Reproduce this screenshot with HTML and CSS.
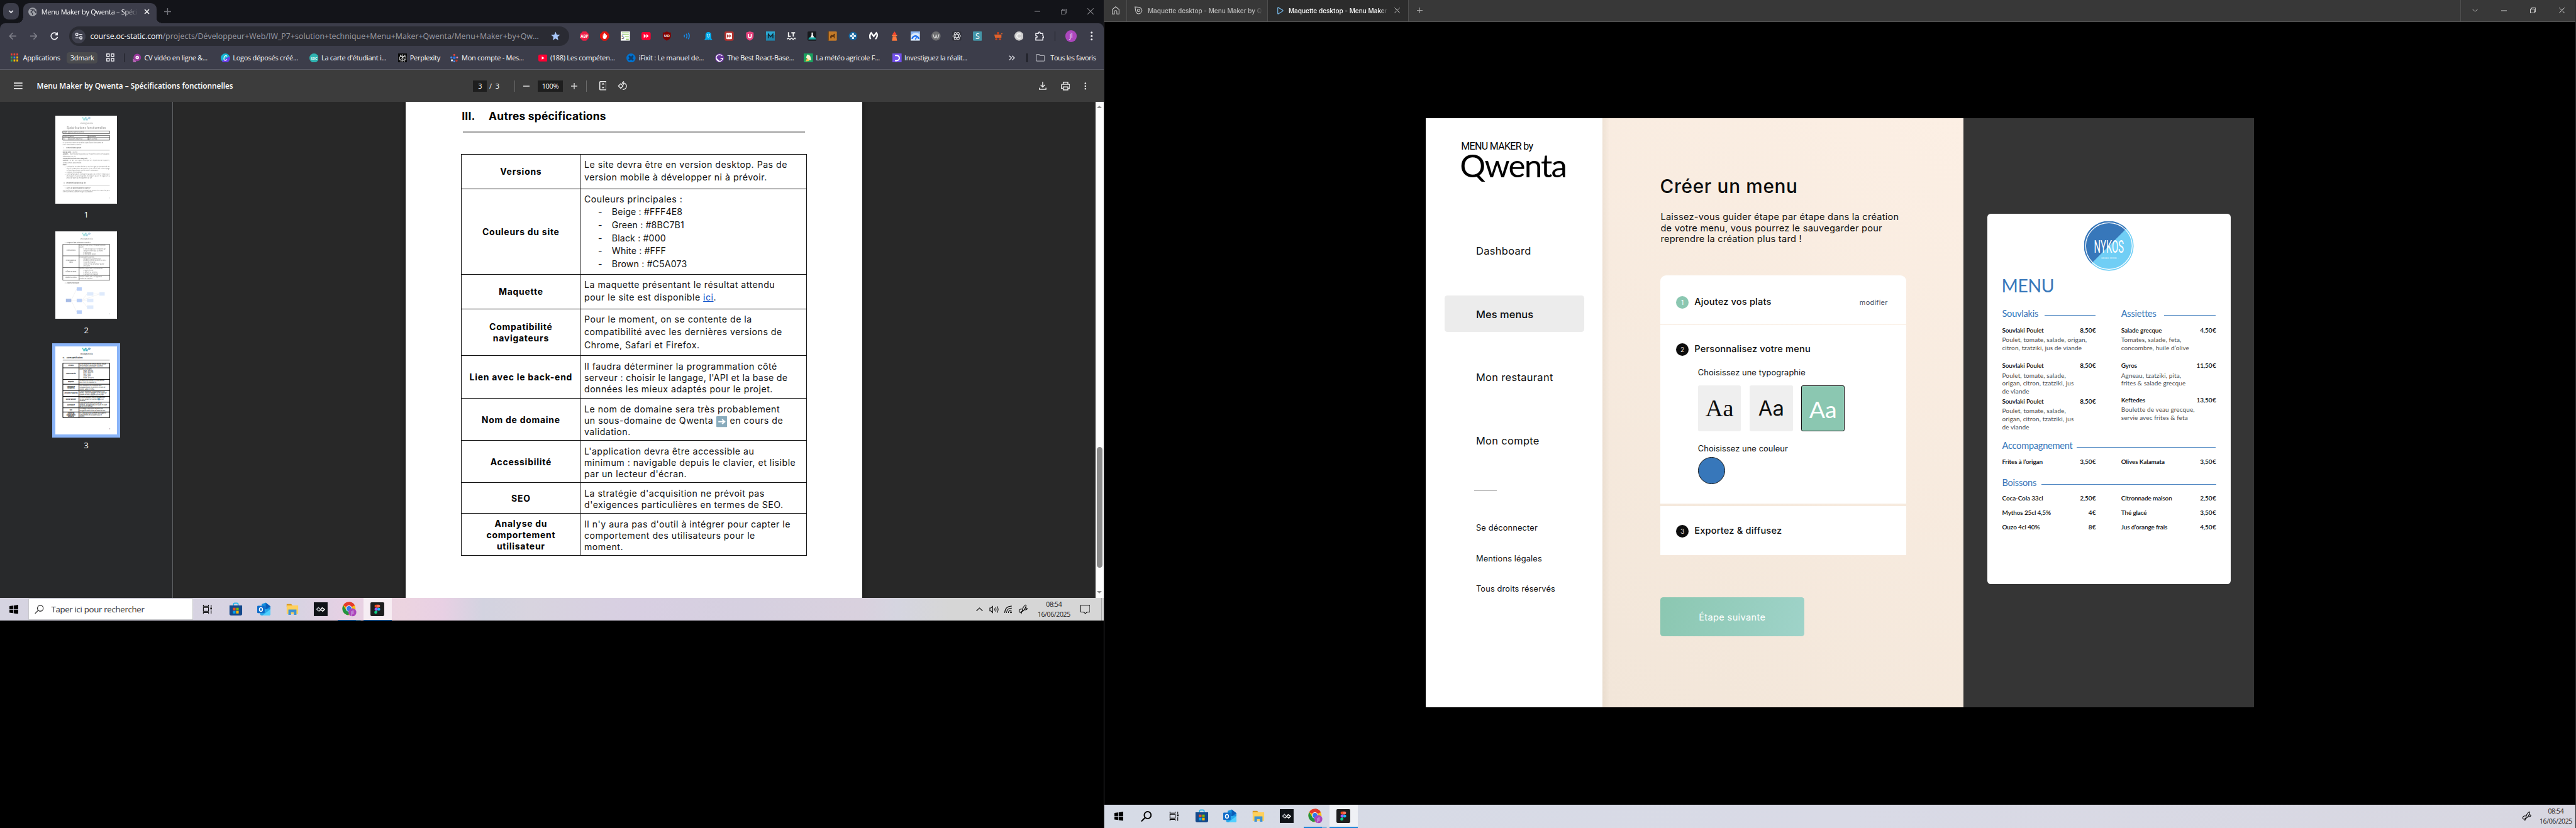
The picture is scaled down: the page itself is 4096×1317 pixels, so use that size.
FILE: index.html
```html
<!DOCTYPE html>
<html lang="fr">
<head>
<meta charset="utf-8">
<title>Menu Maker by Qwenta</title>
<link rel="stylesheet" href="styles.css">
</head>
<body>
<svg class="defs" width="0" height="0">
  <symbol id="i-win" viewBox="0 0 16 16"><path d="M0 2.3 6.6 1.4V7.6H0zM7.4 1.3 16 0V7.6H7.4zM0 8.4H6.6v6.2L0 13.7zM7.4 8.4H16V16L7.4 14.7z"/></symbol>
  <symbol id="i-mag" viewBox="0 0 16 16"><g fill="none" stroke="currentColor"><circle cx="10" cy="6" r="5"/><path d="M6.5 9.5.8 15.2"/></g></symbol>
  <symbol id="i-view" viewBox="0 0 18 16"><g fill="none" stroke="currentColor" stroke-width="1.2"><path d="M1.5 0v2.5h9V0M1.5 16v-2.5h9V16M1.5 4.6h9v6.6h-9zM15 0v4M15 9.500v6.500"/></g><path d="M13.600 5h2.800v3h-2.800z"/></symbol>
  <symbol id="i-store" viewBox="0 0 24 24"><path d="M8 6V3.500Q8 1.500 10 1.500h4q2 0 2 2V6" fill="none" stroke="#22b8f0" stroke-width="1.800"/><path d="M1 5.500h22V20q0 3-3 3H4q-3 0-3-3z" fill="#14498c"/><path d="M7 9.500h4.500V14H7z" fill="#f25022"/><path d="M12.500 9.500H17V14h-4.500z" fill="#7fba00"/><path d="M7 15h4.500v4.500H7z" fill="#00a4ef"/><path d="M12.500 15H17v4.500h-4.500z" fill="#ffb900"/></symbol>
  <symbol id="i-outlook" viewBox="0 0 24 24"><path d="M8 3 15 .5 23 7v5l-9 5-7-6z" fill="#1490df"/><path d="M15 1 23 7l-9 6z" fill="#0a5cb8"/><path d="M5 12h18v8q0 3-3 3H8q-3 0-3-3z" fill="#28a8ea"/><path d="M23 12v8q0 3-3 3H9z" fill="#50d0ff"/><rect x="0" y="6" width="13" height="13" rx="1.500" fill="#0f6cc9"/><ellipse cx="6.500" cy="12.500" rx="2.700" ry="3.200" fill="none" stroke="#fff" stroke-width="1.600"/></symbol>
  <symbol id="i-files" viewBox="0 0 24 24"><path d="M2 3h8l2 2.500V8H2z" fill="#d99a20"/><path d="M2 5.500h20v15H2z" fill="#ffd05c"/><path d="M5 12.500h14V22h-4.500v-4.500h-5V22H5z" fill="#3f93d2"/></symbol>
  <symbol id="i-daily" viewBox="0 0 24 24"><path d="M0 0h24v24H0z" fill="#0e1217"/><g fill="none" stroke="#fff" stroke-width="1.700"><path d="M8.500 15.500 5 12l3-3 3 3" stroke="#b9bec5"/><path d="M9.500 15.500 15 9"/><path d="m14.500 9.500 4 3-3 3-2.500-2"/></g></symbol>
  <symbol id="i-chrome" viewBox="0 0 26 26"><circle cx="13" cy="12" r="11.500" fill="#fbc116"/><path d="M3 6.300A11.500 11.500 0 0 1 23 6.300L13 12z" fill="#e33b2e"/><path d="M13 .5A11.500 11.500 0 0 1 23.300 6.800H13z" fill="#e33b2e"/><path d="M3 6.300A11.500 11.500 0 0 0 12 23.500L17 15 8 14.500z" fill="#229342"/><circle cx="13" cy="12" r="5.400" fill="#fff"/><circle cx="13" cy="12" r="4.300" fill="#3079e8"/><circle cx="19" cy="18.500" r="7" fill="#ab47bc"/><text x="19" y="21.500" font-size="8" fill="#fff" text-anchor="middle" font-family="Open Sans">jl</text></symbol>
  <symbol id="i-figma" viewBox="0 0 24 24"><rect width="24" height="24" rx="2" fill="#1e1e1e"/><path d="M12 4H9.800a2.700 2.700 0 0 0 0 5.400H12z" fill="#f24e1e"/><path d="M12 4h2.200a2.700 2.700 0 0 1 0 5.400H12z" fill="#ff7262"/><path d="M12 9.400H9.800a2.700 2.700 0 0 0 0 5.400H12z" fill="#a259ff"/><circle cx="14.500" cy="12.100" r="2.600" fill="#1abcfe"/><path d="M12 14.700H9.800a2.600 2.600 0 1 0 2.200 2.600z" fill="#0acf83"/></symbol>
  <symbol id="i-pen" viewBox="0 0 18 18"><g fill="none" stroke="currentColor" stroke-width="1.200"><path d="M7 12.500C6.500 9 9.500 3 12.500 1.500c2-.5 1.500 2-.5 5.500-1.300 2.400-3 5-5 5.500zM6.500 8.500c-3-.5-5 1-5 3.500s3 3.500 5 .5M12.500 7c2.500-1 4 .5 2.500 2s-3.500.5-4 .8"/><path d="M6.500 12.500 5 17"/></g></symbol>
  <symbol id="i-w" viewBox="0 0 108 52"><g fill="none" stroke-width="9" stroke-linecap="round"><path d="M5 6 26 46 42 8" stroke="#3fc6b8"/><path d="M42 8 62 46 74 24" stroke="#38a3c4"/><path d="M20 5 42 44 60 6" stroke="#45b5c0" stroke-width="5"/><circle cx="90" cy="16" r="11" stroke="#2f7fb5" stroke-width="7"/></g></symbol>
</svg>

<div class="desk">
<section class="left">
  <div class="chrome">
    <header class="tabs">
      <div class="tabsearch"><svg width="10" height="8" viewBox="0 0 10 8"><path d="m1.500 2 3.500 3.500L8.500 2" fill="none" stroke="#e8e8ee" stroke-width="1.800"/></svg></div>
      <div class="tab">
        <svg width="15" height="15" viewBox="0 0 16 16"><circle cx="8" cy="8" r="8" fill="#9fa1a8"/><path d="M4 3.500c3-1 5 0 4 2s-3 1-3 3 3 1 3 3-1 2-1 2M10 3c1 2 0 3 2 4s2 2 1 3" fill="none" stroke="#3c3d4a" stroke-width="1.800"/></svg>
        <span class="tabname">Menu Maker by Qwenta – Spéci</span>
        <svg width="10" height="10" viewBox="0 0 10 10"><path d="m1.200 1.200 7.600 7.600m0-7.600L1.200 8.800" stroke="#fff" stroke-width="1.600"/></svg>
      </div>
      <svg class="newtab" width="12" height="12" viewBox="0 0 12 12"><path d="M6 0v12M0 6h12" stroke="#73747c" stroke-width="1.500"/></svg>
      <div class="winctl">
        <svg width="10" height="10" viewBox="0 0 10 10"><path d="M0 4.500h10" stroke="#8b8b90"/></svg>
        <svg width="10" height="10" viewBox="0 0 10 10"><path d="M.5 2.500h7v7h-7zM2.500 2.500v-2h7v7h-2" fill="none" stroke="#8b8b90"/></svg>
        <svg width="11" height="11" viewBox="0 0 10 10"><path d="m.3.3 9.400 9.400m0-9.400L.3 9.700" stroke="#8b8b90"/></svg>
      </div>
    </header>
    <div class="bar">
      <nav class="navbtns">
        <svg width="14" height="14" viewBox="0 0 14 14"><path d="M13 7H1.500M7 1.300 1.300 7 7 12.700" fill="none" stroke="#7f808a" stroke-width="1.700"/></svg>
        <svg width="14" height="14" viewBox="0 0 14 14"><path d="M1 7h11.500M7 1.300 12.700 7 7 12.700" fill="none" stroke="#7f808a" stroke-width="1.700"/></svg>
        <svg width="14" height="14" viewBox="0 0 14 14"><path d="M12.500 8.500A5.700 5.700 0 1 1 11.500 3.500M12.300.5v4.300H8" fill="none" stroke="#f0f0f5" stroke-width="1.800"/></svg>
      </nav>
      <div class="omni">
        <span class="site"><svg width="14" height="14" viewBox="0 0 14 14"><g fill="none" stroke="#e6e6ee" stroke-width="1.600"><circle cx="3.500" cy="4" r="2"/><path d="M7.500 4H13M1 10h5.500"/><circle cx="10.500" cy="10" r="2"/></g></svg></span>
        <span class="url"><b>course.oc-static.com</b>/projects/Développeur+Web/IW_P7+solution+technique+Menu+Maker+Qwenta/Menu+Maker+by+Qw...</span>
        <svg width="16" height="16" viewBox="0 0 16 16"><path d="m8 .5 2.200 5.200 5.600.4-4.300 3.600 1.400 5.500L8 12.200l-4.900 3 1.400-5.500L.2 6.100l5.600-.4z" fill="#a8c7fa"/></svg>
      </div>
      <div class="exts">
        <i><svg viewBox="0 0 16 16"><path d="M5 0h6l5 5v6l-5 5H5l-5-5V5z" fill="#ed1e45"/><text x="8" y="10.500" font-size="6.800" font-weight="700" fill="#fff" text-anchor="middle">ABP</text></svg></i>
        <i><svg viewBox="0 0 16 16"><path d="M5 0h6l5 5v6l-5 5H5l-5-5V5z" fill="#e4150f"/><path d="M5 5v5q0 3 3 3t3.500-3l1-3-1.500-.3-.8 1.300V4.500H9V7 3H7.500v4V4H6v4z" fill="#fff"/></svg></i>
        <i><svg viewBox="0 0 16 16"><path d="M0 0h16v16H0z" fill="#fff"/><path d="M2 2.500h12M5 5.500h9M7 8.500h7M9 11.500h5M9 14h5" stroke="#7cc242" stroke-width="1.300"/><text x="1" y="13.500" font-size="9" fill="#444">5</text></svg></i>
        <i><svg viewBox="0 0 16 16"><rect y="1" width="16" height="14" rx="3" fill="#ff0033"/><path d="m4 4.500 4 3.500-4 3.500zm4.500 0 4 3.500-4 3.500z" fill="#fff"/></svg></i>
        <i><svg viewBox="0 0 16 16"><path d="M8 0c2 1.500 4.500 2 7 2v6c0 4-3 6.500-7 8-4-1.500-7-4-7-8V2c2.500 0 5-.5 7-2z" fill="#800000"/><text x="8" y="9.500" font-size="6.500" font-weight="700" fill="#fff" text-anchor="middle">UO</text></svg></i>
        <i><svg viewBox="0 0 16 16"><g fill="none" stroke="#1689e6" stroke-width="1.800"><path d="M2 6q1.500 2 0 4M5.500 4q3 4 0 8M9 2.500q4 5.500 0 11"/></g></svg></i>
        <i><svg viewBox="0 0 16 16"><path d="M3 6.500Q3 1 8 1t5 5.500V12l2 2.500-3 .5-2-1-2 1-2-1-2 1-3-.5L3 12z" fill="#00aef0"/><circle cx="6.300" cy="6" r="1.200" fill="#fff"/><circle cx="9.700" cy="6" r="1.200" fill="#fff"/><path d="M5.800 9q2.200 2 4.400 0" fill="none" stroke="#fff"/></svg></i>
        <i><svg viewBox="0 0 16 16"><rect width="16" height="16" rx="3" fill="#b3302d"/><rect x="3" y="2.500" width="10" height="11" rx="1.500" fill="#fff"/><path d="m4.500 5 3.500 3-3.500 3zm3.800 0 3.500 3-3.500 3z" fill="#b3302d"/></svg></i>
        <i><svg viewBox="0 0 16 16"><path d="M1.500 2 8 0l6.500 2v6q0 6-6.500 8-6.500-2-6.500-8z" fill="#e8447f"/><path d="M5.500 4.500v4q0 2.500 2.500 2.500t2.500-2.500v-4" fill="none" stroke="#fff" stroke-width="1.800"/></svg></i>
        <i><svg viewBox="0 0 16 16"><path d="M0 0h16v16H0z" fill="#1f86ad"/><path d="M0 0h16v6H0z" fill="#2ca8d2"/><path d="M4 12V4.500l4 5 4-5V12" fill="none" stroke="#12242e" stroke-width="1.600"/></svg></i>
        <i><svg viewBox="0 0 16 16"><path d="M3 1.500v7h4M8 2.500h6.500M11.300 2.500V9" fill="none" stroke="#f4f4f4" stroke-width="2"/><path d="m.5 13.500 2-1.800 3 2.300 2.700-2.300 3 2.300 3-2.300 1.500 1.500" fill="none" stroke="#f4f4f4" stroke-width="1.800"/></svg></i>
        <i><svg viewBox="0 0 16 16"><rect width="16" height="16" rx="2" fill="#17191d"/><path d="M7 2h2.500v4.500L13 13H3.500L7 6.500z" fill="#f3f3f3"/><path d="M2.500 10.500h11L15 14H1.500z" fill="#17a7a1"/></svg></i>
        <i><svg viewBox="0 0 16 16"><rect width="16" height="16" rx="1.500" fill="#c47a28"/><path d="M0 0h2v16H0z" fill="#6b4115"/><path d="M4.500 12V8l2-2 3 .5L11 4l2 .5-.8 2V12h-1.500V9.500H7V12z" fill="#5b3310"/></svg></i>
        <i><svg viewBox="0 0 16 16"><circle cx="8" cy="8" r="7.500" fill="#16659c"/><path d="M8 3v10M3 8h10" stroke="#e9f2f8" stroke-width="3.400"/><circle cx="8" cy="8" r="1.400" fill="#16659c"/></svg></i>
        <i><svg viewBox="0 0 16 16"><path d="M2.500 13.500Q-.5 7 3.500 2.500l4.500 6 4.500-6Q16.500 7 11 13.500" fill="none" stroke="#fff" stroke-width="2.600"/></svg></i>
        <i><svg viewBox="0 0 16 16"><path d="M5 4 8 0l3 4v2H5z" fill="#f4442e"/><path d="M3.500 6h9v1.800h-9zM5 8.500h6l1.500 7.500h-9z" fill="#ff7a3d"/></svg></i>
        <i><svg viewBox="0 0 16 16"><path d="M0 0h16v16H0z" fill="#d9e8fb"/><path d="M0 0h16v5Q8-1 0 7z" fill="#8db6f2"/><path d="M2.500 13A5.800 5.800 0 0 1 14 13" fill="none" stroke="#1b6ef3" stroke-width="2.600"/><path d="m8 14 2.500-4" stroke="#1b6ef3" stroke-width="1.800"/></svg></i>
        <i><svg viewBox="0 0 16 16"><circle cx="8" cy="8" r="8" fill="#6d6e70"/><path d="M3 5q1.500 6.500 3 6.500T8.200 5.500Q9 11.500 10.500 11.500T13 5" fill="none" stroke="#d9d9d9" stroke-width="1.400"/></svg></i>
        <i><svg viewBox="0 0 16 16"><rect width="16" height="16" rx="2" fill="#30313a"/><g fill="none" stroke="#e7e7ea"><ellipse cx="8" cy="8" rx="7" ry="2.700"/><ellipse cx="8" cy="8" rx="7" ry="2.700" transform="rotate(60 8 8)"/><ellipse cx="8" cy="8" rx="7" ry="2.700" transform="rotate(120 8 8)"/></g></svg></i>
        <i><svg viewBox="0 0 16 16"><rect width="16" height="16" rx="1.500" fill="#4596a8"/><text x="8" y="13" font-size="13.500" fill="#fff" text-anchor="middle">S</text></svg></i>
        <i><svg viewBox="0 0 16 16"><path d="M1 5.500h12.500V11H2.500z" fill="#e0622c"/><path d="M6 1h3v4H6z" fill="#c9421c"/><circle cx="4.500" cy="13.500" r="1.800" fill="#c9421c"/><circle cx="11" cy="13.500" r="1.800" fill="#c9421c"/><path d="M13 4h3" stroke="#e0622c" stroke-width="1.500"/></svg></i>
        <i><svg viewBox="0 0 16 16"><circle cx="8" cy="8" r="8" fill="#cdcdcd"/><path d="M11 5.200A4 4 0 1 0 11 10.800" fill="none" stroke="#f3f3f3" stroke-width="2"/></svg></i>
        <i><svg viewBox="0 0 16 16"><path d="M1 3.500h4.500V2.800a1.700 1.700 0 0 1 3.400 0v.7h4.300v4.300h.6a1.500 1.500 0 0 1 0 3.200h-.6v4H1v-4q2.500 0 2.500-1.800T1 7.400z" fill="none" stroke="#eeeef4" stroke-width="1.500"/></svg></i>
      </div>
      <span class="vline"></span>
      <span class="avatar">jl</span>
      <svg class="dots" width="4" height="16" viewBox="0 0 4 16"><g fill="#f0f0f5"><circle cx="2" cy="2" r="1.700"/><circle cx="2" cy="8" r="1.700"/><circle cx="2" cy="14" r="1.700"/></g></svg>
    </div>
    <div class="marks">
      <span class="apps"><svg width="13" height="14" viewBox="0 0 13 14"><g><path d="M0 0h3v3.500H0zM5 0h3v3.500H5zM10 0h3v3.500h-3z" fill="#ea4335"/><path d="M0 5.200h3v3.500H0z" fill="#34a853"/><path d="M5 5.200h3v3.500H5z" fill="#4285f4"/><path d="M10 5.200h3v3.500h-3zM10 10.500h3V14h-3zM5 10.500h3V14H5z" fill="#fbbc04"/><path d="M0 10.500h3V14H0z" fill="#34a853"/></g></svg>Applications</span>
      <span class="pill">3dmark</span>
      <svg class="gridico" width="14" height="14" viewBox="0 0 14 14"><path d="M.8.8h4.400v4.400H.8zM8.800.8h4.400v4.400H8.800zM.8 8.800h4.400v4.400H.8zM8.800 8.800h4.400v4.400H8.800z" fill="none" stroke="#f0f0f5" stroke-width="1.500"/></svg>
      <span class="vline"></span>
      <a class="mk"><svg viewBox="0 0 16 16"><circle cx="9" cy="7" r="6.500" fill="#9a3b9c"/><path d="M1 8.500 7 13v3H2z" fill="#b565b5"/><circle cx="9" cy="7" r="3" fill="#fff"/><path d="m7.500 8 3-2" stroke="#9a3b9c"/></svg>CV vidéo en ligne &amp;...</a>
      <a class="mk"><svg viewBox="0 0 16 16"><circle cx="8" cy="8" r="8" fill="#15b6d4"/><path d="M2 13.200A8 8 0 0 0 15.500 5z" fill="#6a3be6"/><path d="M10.800 5.500Q10.500 3.500 8.500 4 5.500 5 5.500 9.500q.3 3 2.500 2.700 2-.3 2.800-2" fill="none" stroke="#fff" stroke-width="1.300"/></svg>Logos déposés créé...</a>
      <a class="mk"><svg viewBox="0 0 16 16"><circle cx="8" cy="8" r="8" fill="#2fb3b0"/><text x="8" y="10.500" font-size="6.500" font-weight="700" fill="#e4fbfa" text-anchor="middle">ISIC</text></svg>La carte d'étudiant i...</a>
      <a class="mk short"><svg viewBox="0 0 16 16"><path d="M0 0h16v16H0z" fill="#0b0b0b"/><path d="M8 1.500v13M4 2.500 8 6.500l4-4V6H4zM2.500 6h11v5h-2.500M2.500 6v5H5M5 14V9.500L8 6.500l3 3V14L8 11z" fill="none" stroke="#fff" stroke-width=".9"/></svg>Perplexity</a>
      <a class="mk"><svg viewBox="0 0 16 16"><circle cx="8" cy="2.500" r="1.800" fill="#e8453c"/><circle cx="3" cy="7" r="1.700" fill="#4a8df0"/><circle cx="8" cy="7.500" r="2.500" fill="#2d6fdc"/><circle cx="13" cy="7" r="1.500" fill="#f08bb4"/><circle cx="4" cy="12" r="1.900" fill="#dfe6f5"/><circle cx="12" cy="12.500" r="1.900" fill="#b8362f"/><circle cx="8" cy="14" r="1.600" fill="#4a8df0"/></svg>Mon compte - Mes...</a>
      <a class="mk"><svg viewBox="0 0 16 16"><rect y="2" width="16" height="12" rx="2.500" fill="#ff0033"/><path d="m6 5.300 4.500 2.700L6 10.700z" fill="#fff"/></svg>(188) Les compéten...</a>
      <a class="mk"><svg viewBox="0 0 16 16"><circle cx="8" cy="8" r="8" fill="#0071ce"/><path d="m4.500 4.500 7 7m0-7-7 7" stroke="#123b66" stroke-width="3.200"/></svg>iFixit : Le manuel de...</a>
      <a class="mk"><svg viewBox="0 0 16 16"><circle cx="8" cy="8" r="8" fill="#663399"/><path d="M2 8.500 7.500 14M12.500 4.500A5.800 5.800 0 1 0 13.500 8.500H9.500" fill="none" stroke="#fff" stroke-width="1.500"/></svg>The Best React-Base...</a>
      <a class="mk"><svg viewBox="0 0 16 16"><path d="M0 0h16v16H0z" fill="#1aa260"/><path d="M6 2q5 0 6 5l1 5-5-1-4-4z" fill="#f7efd0"/><path d="m3 14 3-6 4 5z" fill="#f2c14b"/></svg>La météo agricole F...</a>
      <a class="mk"><svg viewBox="0 0 16 16"><path d="M0 0h16v16H0z" fill="#7451eb"/><path d="M4.500 3.500h3q4.500.5 4.500 4.500t-4.500 4.500h-3" fill="none" stroke="#fff" stroke-width="2.200"/></svg>Investiguez la réalit...</a>
      <span class="more"><svg width="11" height="9" viewBox="0 0 11 9"><path d="m1 .8 3.700 3.700L1 8.200M6 .8l3.700 3.700L6 8.200" fill="none" stroke="#e4e4ea" stroke-width="1.500"/></svg></span>
      <span class="vline"></span>
      <span class="allmarks"><svg width="16" height="13" viewBox="0 0 16 13"><path d="M.8 11V2q0-1.200 1.200-1.200h3.800l1.700 1.900H14q1.200 0 1.200 1.200V11q0 1.200-1.200 1.200H2Q.8 12.200.8 11z" fill="none" stroke="#a9aab3" stroke-width="1.400"/></svg>Tous les favoris</span>
    </div>
    <div class="pdfbar">
      <svg class="burger" width="15" height="12" viewBox="0 0 15 12"><path d="M0 1.200h15M0 6h15M0 10.800h15" stroke="#e3e3e3" stroke-width="1.700"/></svg>
      <span class="pdftitle">Menu Maker by Qwenta – Spécifications fonctionnelles</span>
      <span class="pagebox">3</span><span class="of">/&nbsp; 3</span>
      <span class="sep"></span>
      <svg class="minus" width="11" height="11" viewBox="0 0 11 11"><path d="M0 5.500h11" stroke="#d0d0d0" stroke-width="1.800"/></svg>
      <span class="zoombox">100%</span>
      <svg class="plus" width="11" height="11" viewBox="0 0 11 11"><path d="M0 5.500h11M5.500 0v11" stroke="#d0d0d0" stroke-width="1.600"/></svg>
      <span class="sep"></span>
      <svg class="fit" width="13" height="16" viewBox="0 0 13 16"><rect x=".8" y=".8" width="11.400" height="14.400" rx="1" fill="none" stroke="#ededed" stroke-width="1.600"/><path d="M6.500 3 9 6H4zM6.500 13 9 10H4z" fill="#ededed"/></svg>
      <svg class="rot" width="17" height="17" viewBox="0 0 17 17"><path d="M1.500 8.500 5.500 4.500l4 4-4 4zM9 3.200a5.700 5.700 0 1 1 0 11.300M11 .5 8.300 3.200 11 6" fill="none" stroke="#ededed" stroke-width="1.500"/></svg>
      <span class="pdfright">
        <svg width="13" height="14" viewBox="0 0 13 14"><path d="M6.500 0v9M2.800 5.500l3.700 3.700 3.700-3.700M.8 10.500v2.700h11.400v-2.700" fill="none" stroke="#ededed" stroke-width="1.500"/></svg>
        <svg width="16" height="15" viewBox="0 0 16 15"><path d="M4 4V.8h8V4M4 11.500H.8V6Q.8 4.500 2.500 4.500h11q1.700 0 1.700 1.500v5.500H12M4 9h8v5.200H4z" fill="none" stroke="#ededed" stroke-width="1.500"/></svg>
        <svg width="4" height="13" viewBox="0 0 4 13"><g fill="#ededed"><circle cx="2" cy="1.700" r="1.400"/><circle cx="2" cy="6.500" r="1.400"/><circle cx="2" cy="11.300" r="1.400"/></g></svg>
      </span>
    </div>
    <div class="viewer">
      <aside class="thumbs">
        <figure class="thumb"><svg class="pg dim" viewBox="0 0 794 1123">
          <use href="#i-w" x="341" y="13" width="110" height="53"/><text class="brand" x="400" y="102">webgencia</text>
          <text x="397" y="168" font-size="36" text-anchor="middle" textLength="500">Spécifications fonctionnelles</text>
          <path class="tb" d="M95 195h600v33H95zM175 195v33M95 252h600v60H95zM95 279h600M175 252v60M419 252v60"/>
          <g class="b"><text x="105" y="218">Projet</text><text x="100" y="272">Version</text><text x="182" y="272">Auteur</text><text x="425" y="272">Approbation</text></g>
          <text x="182" y="218">Menu Maker by Qwenta</text><text x="105" y="302">1.0</text><text x="182" y="302">Soufiane (Webgencia)</text><text x="425" y="302">John (Qwenta)</text>
          <text x="95" y="353">Le but de ce document est de définir la spécification fonctionnelle de</text><text x="95" y="374">l'outil "Menu Maker by Qwenta".</text>
          <g class="b"><text x="108" y="420">I.</text><text x="140" y="420" font-size="18">Présentation du projet</text><text x="95" y="470">Nom du client :</text><text x="95" y="500">Activités :</text><text x="95" y="554">Collaborations passées avec Webgencia :</text><text x="95" y="579">Contexte :</text><text x="95" y="638">Projet :</text><text x="108" y="864">II.</text><text x="140" y="864" font-size="18">Périmètre fonctionnel du site</text><text x="118" y="932">1.</text><text x="142" y="932">Qu'est-ce que Menu Maker by Qwenta ?</text></g>
          <path class="rl" d="M95 441h600M95 888h600"/>
          <text x="222" y="470">Qwenta</text><text x="185" y="500" textLength="510">impression de supports pour les professionnels (restauration,</text><text x="95" y="527">événements, BTP, etc.)</text><text x="440" y="554">2</text><text x="182" y="579" textLength="513">En tant que leader historique de l'impression de supports,</text><text x="95" y="608">Qwenta cherche à se diversifier.</text>
          <text x="142" y="662" textLength="553">L'entreprise souhaite réaliser un outil en ligne qui permettra à ses</text><text x="142" y="683" textLength="553">clients restaurateurs de publier et de choisir une mise en page</text><text x="142" y="704">en forme élaborée avec un outil nommé "Menu Maker".</text><text x="142" y="734">L'outil doit être dynamique.</text><text x="142" y="758" textLength="553">Qwenta fait appel à Webgencia dans un premier temps pour</text><text x="142" y="779" textLength="553">développer les spécifications techniques du site et organiser la</text><text x="142" y="800">gestion de projet du développement du site.</text>
          <g><circle cx="124" cy="657" r="4"/><circle cx="124" cy="729" r="4"/><circle cx="124" cy="753" r="4"/></g>
          <text x="95" y="962" textLength="600">Une interface sur laquelle les restaurateurs peuvent se connecter pour</text><text x="95" y="983">créer leurs menus à diffuser en ligne ou à imprimer.</text><text x="690" y="1064">1</text>
        </svg><figcaption>1</figcaption></figure>
        <figure class="thumb"><svg class="pg dim" viewBox="0 0 794 1123">
          <use href="#i-w" x="341" y="13" width="110" height="53"/><text class="brand" x="400" y="102">webgencia</text>
          <g class="b"><text x="118" y="152">2.</text><text x="142" y="152">Que pourra faire l'utilisateur sur le site ?</text><text x="118" y="665">3.</text><text x="142" y="665">Arborescence du site</text></g>
          <path class="tb" d="M95 165h600v459H95zM304 165v459M95 312h600M95 462h600M95 564h600"/>
          <g class="b m"><text x="200" y="248">Créer un menu</text><text x="200" y="378">Personnaliser un</text><text x="200" y="398">menu</text><text x="200" y="518">Diffuser un menu</text><text x="200" y="598">Imprimer un menu</text></g>
          <text x="310" y="188">Pour créer son menu, le restaurateur pourra</text><text x="310" y="210">ajouter :</text><text x="358" y="234">le nom des plats qui le composent par</text><text x="358" y="256">catégorie (entrée, plat ou dessert)</text><text x="358" y="278">le prix du plat</text><text x="358" y="300">la description du plat</text>
          <text x="310" y="336">Les utilisateurs pourront :</text><text x="358" y="358">enregistrer leur préférence de</text><text x="358" y="380">branding (choix de la couleur du menu)</text><text x="358" y="402">et logo du restaurant</text><text x="358" y="425">choisir une typo dynamique à partir</text><text x="358" y="447">de modèles</text>
          <text x="310" y="484">Une fois le menu prêt, il est possible de</text><text x="358" y="508">l'exporter en PDF</text><text x="358" y="530">le diffuser sur Deliveroo</text><text x="358" y="552">le partager sur Instagram</text><text x="310" y="586">Une fois le menu prêt, il est également</text><text x="310" y="608">possible de l'imprimer.</text>
          <path d="M203 882 273 736M203 882h70M203 882l70 148M338 882l67-82M338 882h67M338 882l67 84M338 882l226-82M486 800h78" fill="none" stroke="#c5c5c5" stroke-width="3"/>
          <path d="M135 861h68v42h-68z" fill="#5c84d0"/><path d="M273 714h65v45h-65zM273 861h65v42h-65zM273 1008h65v45h-65z" fill="#7fa8f2"/><path d="M405 777h81v45h-81zM564 777h67v45h-67zM405 861h81v42h-81zM405 945h81v45h-81z" fill="#c3d9f9"/>
          <text x="690" y="1064">2</text>
        </svg><figcaption>2</figcaption></figure>
        <figure class="thumb on"><svg class="pg" viewBox="0 0 794 1123">
          <use href="#i-w" x="341" y="13" width="110" height="53"/><text class="brand" x="400" y="102">webgencia</text>
          <g class="b"><text x="95" y="152" font-size="20">III.</text><text x="142" y="152" font-size="20">Autres spécifications</text></g>
          <path class="rl" d="M95 175h600"/>
          <path class="tb" d="M96 213h600v698H96zM303 213v698M96 273h600M96 422h600M96 483h600M96 564h600M96 639h600M96 712h600M96 785h600M96 838h600"/>
          <g class="b m"><text x="200" y="248">Versions</text><text x="200" y="352">Couleurs du site</text><text x="200" y="458">Maquette</text><text x="200" y="519">Compatibilité</text><text x="200" y="539">navigateurs</text><text x="200" y="606">Lien avec le back-end</text><text x="200" y="681">Nom de domaine</text><text x="200" y="754">Accessibilité</text><text x="200" y="817">SEO</text><text x="200" y="861">Analyse du</text><text x="200" y="880">comportement</text><text x="200" y="900">utilisateur</text></g>
          <text x="310" y="236">Le site devra être en version desktop. Pas de</text><text x="310" y="258">version mobile à développer ni à prévoir.</text>
          <text x="310" y="295">Couleurs principales :</text><text x="358" y="318">Beige : #FFF4E8</text><text x="358" y="340">Green : #8BC7B1</text><text x="358" y="363">Black : #000</text><text x="358" y="385">White : #FFF</text><text x="358" y="408">Brown : #C5A073</text>
          <text x="310" y="445">La maquette présentant le résultat attendu</text><text x="310" y="467">pour le site est disponible ici.</text>
          <text x="310" y="506">Pour le moment, on se contente de la</text><text x="310" y="528">compatibilité avec les dernières versions de</text><text x="310" y="550">Chrome, Safari et Firefox.</text>
          <text x="310" y="587">Il faudra déterminer la programmation côté</text><text x="310" y="606">serveur : choisir le langage, l'API et la base de</text><text x="310" y="626">données les mieux adaptés pour le projet.</text>
          <text x="310" y="660">Le nom de domaine sera très probablement</text><text x="310" y="680">un sous-domaine de Qwenta      en cours de</text><text x="310" y="699">validation.</text><path d="M545 662h24v24h-24z" fill="#5b9bbd"/>
          <text x="310" y="734">L'application devra être accessible au</text><text x="310" y="753">minimum : navigable depuis le clavier, et lisible</text><text x="310" y="772">par un lecteur d'écran.</text>
          <text x="310" y="807">La stratégie d'acquisition ne prévoit pas</text><text x="310" y="827">d'exigences particulières en termes de SEO.</text>
          <text x="310" y="861">Il n'y aura pas d'outil à intégrer pour capter le</text><text x="310" y="880">comportement des utilisateurs pour le</text><text x="310" y="900">moment.</text><text x="690" y="1064">3</text>
        </svg><figcaption>3</figcaption></figure>
      </aside>
      <main class="canvas">
        <article class="page">
          <h2><span>III.</span>Autres spécifications</h2>
          <hr>
          <table>
            <tr class="r1"><th>Versions</th><td>Le site devra être en version desktop. Pas de<br>version mobile à développer ni à prévoir.</td></tr>
            <tr class="r2"><th>Couleurs du site</th><td>Couleurs principales :<ul><li>Beige : #FFF4E8</li><li>Green : #8BC7B1</li><li>Black : #000</li><li>White : #FFF</li><li>Brown : #C5A073</li></ul></td></tr>
            <tr class="r3"><th>Maquette</th><td>La maquette présentant le résultat attendu<br>pour le site est disponible <a>ici</a>.</td></tr>
            <tr class="r4"><th>Compatibilité<br>navigateurs</th><td>Pour le moment, on se contente de la<br>compatibilité avec les dernières versions de<br>Chrome, Safari et Firefox.</td></tr>
            <tr class="r5 tight"><th>Lien avec le back-end</th><td>Il faudra déterminer la programmation côté<br><span class="nar">serveur : choisir le langage, l'API et la base de</span><br>données les mieux adaptés pour le projet.</td></tr>
            <tr class="r6 tight"><th>Nom de domaine</th><td>Le nom de domaine sera très probablement<br>un sous-domaine de Qwenta <svg width="19" height="19" viewBox="0 0 19 19"><rect width="19" height="19" rx="1.500" fill="#8aacbd"/><path d="M3.500 9.500h10M10 5.500l4.500 4-4.500 4" fill="none" stroke="#fff" stroke-width="2.200"/></svg> en cours de<br>validation.</td></tr>
            <tr class="r7 tight"><th>Accessibilité</th><td>L'application devra être accessible au<br>minimum : navigable depuis le clavier, et lisible<br>par un lecteur d'écran.</td></tr>
            <tr class="r8 tight"><th>SEO</th><td>La stratégie d'acquisition ne prévoit pas<br>d'exigences particulières en termes de SEO.</td></tr>
            <tr class="r9 tight"><th>Analyse du<br>comportement<br>utilisateur</th><td>Il n'y aura pas d'outil à intégrer pour capter le<br>comportement des utilisateurs pour le<br>moment.</td></tr>
          </table>
        </article>
      </main>
      <div class="scroll"><i class="up"></i><b></b><i class="down"></i></div>
    </div>
  </div>
  <footer class="task task-l">
    <span class="slot s48"><svg width="16" height="16"><use href="#i-win"/></svg></span>
    <div class="search"><svg width="16" height="16"><use href="#i-mag"/></svg>Taper ici pour rechercher</div>
    <span class="slot s50"><svg width="18" height="16"><use href="#i-view"/></svg></span>
    <span class="slot"><svg width="24" height="24"><use href="#i-store"/></svg></span>
    <span class="slot"><svg width="24" height="24"><use href="#i-outlook"/></svg></span>
    <span class="slot"><svg width="24" height="24"><use href="#i-files"/></svg></span>
    <span class="slot"><svg width="24" height="24"><use href="#i-daily"/></svg></span>
    <span class="slot run multi"><svg width="26" height="26"><use href="#i-chrome"/></svg></span>
    <span class="slot run act"><svg width="24" height="24"><use href="#i-figma"/></svg></span>
    <div class="tray">
      <svg width="12" height="7" viewBox="0 0 12 7"><path d="M.6 6.400 6 1l5.400 5.400" fill="none" stroke="#000" stroke-width="1.200"/></svg>
      <svg width="17" height="14" viewBox="0 0 17 14"><path d="M1 4.500h2L6 1.500v11l-3-3H1zM8.500 5q1 2 0 4M10.800 3.300q2.200 3.700 0 7.400M13.500 1.300q3.800 5.700 0 11.400" fill="none" stroke="#000" stroke-width="1.100"/></svg>
      <svg width="14" height="14" viewBox="0 0 14 14"><g fill="none" stroke="#000" stroke-width="1.100"><path d="M.6 13Q1 1.500 13 1.200"/><path d="M3.800 13Q4 4.600 13 4.600"/><path d="M7 13q0-4.800 5.500-4.800"/></g><circle cx="11.500" cy="12" r="1.500"/></svg>
      <svg width="18" height="18"><use href="#i-pen"/></svg>
      <span class="clock">08:54<br>16/06/2025</span>
      <svg width="17" height="16" viewBox="0 0 17 16"><path d="M.6.6h15.800v12H11.500L8.500 15.200l-3-2.600H.6z" fill="none" stroke="#000" stroke-width="1.100"/></svg>
      <span class="peek"></span>
    </div>
  </footer>
  <div class="void"></div>
</section>

<section class="right">
  <header class="fbar">
    <span class="home"><svg width="13" height="14" viewBox="0 0 13 14"><path d="M.6 5.500 6.500.8l5.900 4.700v7.900H8.600V9q0-1.500-2.100-1.500T4.400 9v4.400H.6z" fill="none" stroke="#cfcfcf" stroke-width="1.100"/></svg></span>
    <span class="ftab"><svg width="14" height="14" viewBox="0 0 14 14"><g fill="none" stroke="#cfcfcf" stroke-width="1.100"><path d="M.8 1 8 1.700q4.700 2 5 6L10.500 12 7.500 13.200Q3 13 2 8z"/><circle cx="7" cy="7" r="2.200"/></g></svg><span>Maquette desktop - Menu Maker by Q</span></span>
    <span class="ftab on"><svg width="11" height="13" viewBox="0 0 11 13"><path d="M.8 1.700Q.8.500 1.800 1l7.700 4.700q.8.800 0 1.600L1.800 12q-1 .5-1-.7z" fill="none" stroke="#7cc4f8" stroke-width="1.200"/></svg><span>Maquette desktop - Menu Maker</span><svg width="10" height="10" viewBox="0 0 10 10"><path d="m.4.4 9.200 9.200m0-9.200L.4 9.600" stroke="#d5d5d5"/></svg></span>
    <svg class="fplus" width="10" height="10" viewBox="0 0 10 10"><path d="M5 0v10M0 5h10" stroke="#b5b5b5"/></svg>
    <span class="fctl">
      <svg width="10" height="6" viewBox="0 0 10 6"><path d="m.5.7 4.500 4 4.500-4" fill="none" stroke="#b9b9b9"/></svg>
      <svg width="10" height="10" viewBox="0 0 10 10"><path d="M0 5.500h10" stroke="#e6e6e6"/></svg>
      <svg width="10" height="10" viewBox="0 0 10 10"><path d="M.5 2.500h7v7h-7zM2.500 2.500v-2h7v7h-2" fill="none" stroke="#e6e6e6"/></svg>
      <svg width="10" height="10" viewBox="0 0 10 10"><path d="m.3.3 9.400 9.400m0-9.400L.3 9.700" stroke="#e6e6e6"/></svg>
    </span>
  </header>
  <div class="stage">
    <div class="frame">
      <aside class="side">
        <div class="logo1">MENU MAKER by</div>
        <div class="logo2">Qwenta</div>
        <nav><a>Dashboard</a><a class="on">Mes menus</a><a>Mon restaurant</a><a>Mon compte</a></nav>
        <hr>
        <div class="foot"><a>Se déconnecter</a><a>Mentions légales</a><a>Tous droits réservés</a></div>
      </aside>
      <main class="make">
        <h1>Créer un menu</h1>
        <p>Laissez-vous guider étape par étape dans la création<br>de votre menu, vous pourrez le sauvegarder pour<br>reprendre la création plus tard !</p>
        <div class="step st1"><div class="head"><b class="g">1</b>Ajoutez vos plats<small>modifier</small></div></div>
        <div class="step st2"><div class="head"><b>2</b>Personnalisez votre menu</div>
          <div class="lab l1">Choisissez une typographie</div>
          <div class="tiles"><span class="ser">Aa</span><span>Aa</span><span class="sel">Aa</span></div>
          <div class="lab l2">Choisissez une couleur</div>
          <div class="swatch"></div>
        </div>
        <div class="step st3"><div class="head"><b>3</b>Exportez &amp; diffusez</div></div>
        <div class="next">Étape suivante</div>
      </main>
      <div class="preview">
        <div class="menu">
          <svg class="nykos" width="86" height="86" viewBox="0 0 86 86"><circle cx="43" cy="43" r="43" fill="#70cef5"/><path d="M73.400 12.600A43 43 0 1 0 12.600 73.400z" fill="#3777ba"/><circle cx="43" cy="43" r="40.500" fill="none" stroke="#fff" stroke-width="1.400"/><text x="17" y="54.500" font-family="Roboto" font-weight="400" font-size="30" fill="#fff" textLength="52" lengthAdjust="spacingAndGlyphs">NYKOS</text><text x="43" y="65.500" font-family="Lato" font-size="4" fill="#dff2fc" text-anchor="middle" textLength="36">— GREEK FOOD —</text></svg>
          <div class="title">MENU</div>
          <div class="cols">
            <div>
              <h3 class="w75">Souvlakis</h3>
              <div class="dish"><p>Souvlaki Poulet<i>8,50 €</i></p>Poulet, tomate, salade, origan,<br>citron, tzatziki, jus de viande</div>
              <div class="dish"><p>Souvlaki Poulet<i>8,50 €</i></p>Poulet, tomate, salade,<br>origan, citron, tzatziki, jus<br>de viande</div>
              <div class="dish"><p>Souvlaki Poulet<i>8,50 €</i></p>Poulet, tomate, salade,<br>origan, citron, tzatziki, jus<br>de viande</div>
            </div>
            <div>
              <h3 class="w75">Assiettes</h3>
              <div class="dish"><p>Salade grecque<i>4,50 €</i></p>Tomates, salade, feta,<br>concombre, huile d’olive</div>
              <div class="dish h60"><p>Gyros<i>11,50 €</i></p>Agneau, tzatziki, pita,<br>frites &amp; salade grecque</div>
              <div class="dish"><p>Keftedes<i>13,50 €</i></p>Boulette de veau grecque,<br>servie avec frites &amp; feta</div>
            </div>
          </div>
          <h3 class="acc w131">Accompagnement</h3>
          <div class="cols rows"><p>Frites à l’origan<i>3,50 €</i></p><p>Olives Kalamata<i>3,50 €</i></p></div>
          <h3 class="boi w69">Boissons</h3>
          <div class="cols rows"><p>Coca-Cola 33cl<i>2,50 €</i></p><p>Citronnade maison<i>2,50 €</i></p><p>Mythos 25cl 4,5%<i>4 €</i></p><p>Thé glacé<i>3,50 €</i></p><p>Ouzo 4cl 40%<i>8 €</i></p><p>Jus d’orange frais<i>4,50 €</i></p></div>
        </div>
      </div>
    </div>
  </div>
  <footer class="task task-r">
    <span class="slot s48"><svg width="16" height="16"><use href="#i-win"/></svg></span>
    <span class="slot s48"><svg class="big" width="19" height="19"><use href="#i-mag"/></svg></span>
    <span class="slot s48"><svg width="18" height="16"><use href="#i-view"/></svg></span>
    <span class="slot"><svg width="24" height="24"><use href="#i-store"/></svg></span>
    <span class="slot"><svg width="24" height="24"><use href="#i-outlook"/></svg></span>
    <span class="slot"><svg width="24" height="24"><use href="#i-files"/></svg></span>
    <span class="slot"><svg width="24" height="24"><use href="#i-daily"/></svg></span>
    <span class="slot run multi"><svg width="26" height="26"><use href="#i-chrome"/></svg></span>
    <span class="slot run act"><svg width="24" height="24"><use href="#i-figma"/></svg></span>
    <div class="tray"><svg width="18" height="18"><use href="#i-pen"/></svg><span class="clock">08:54<br>16/06/2025</span></div>
  </footer>
</section>
</div>
</body>
</html>
```
FILE: styles.css
```css
* { box-sizing: border-box; margin: 0; padding: 0; }
html { background: #000; }
body { width: 4096px; height: 1317px; overflow: hidden; background: #000; }
svg { display: block; flex: none; }
.defs { position: absolute; }
.desk { zoom: 0.9142857; width: 4480px; height: 1440px; display: flex; background: #000; font: 12px/1.3 "Open Sans", "Noto Sans", sans-serif; color: #fff; white-space: nowrap; }
.left { width: 1921px; border-right: 1px solid #3a3a3c; display: flex; flex-direction: column; flex: none; }
.right { flex: 1; min-width: 0; display: flex; flex-direction: column; border-right: 1px solid #2c2c2e; }

/* Browser */
.chrome { height: 1040px; display: flex; flex-direction: column; background: #131419; }
.tabs { height: 40px; display: flex; padding-left: 6px; }
.tabsearch { width: 27px; height: 28px; margin-top: 6px; border-radius: 9px; background: #3c3d4a; display: flex; align-items: center; justify-content: center; }
.tab { position: relative; width: 232px; height: 34px; margin: 6px 0 0 7px; border-radius: 10px 10px 0 0; background: #3c3d4a; display: flex; align-items: center; padding: 0 11px 5px 9px; }
.tab::before, .tab::after { content: ""; position: absolute; bottom: 0; width: 8px; height: 8px; }
.tab::before { left: -8px; background: radial-gradient(circle at 0 0, transparent 7.500px, #3c3d4a 8px); }
.tab::after { right: -8px; background: radial-gradient(circle at 100% 0, transparent 7.500px, #3c3d4a 8px); }
.tabname { width: 169px; margin: 0 auto 0 8px; overflow: hidden; letter-spacing: -.32px; -webkit-mask: linear-gradient(90deg, #000 85%, transparent); mask: linear-gradient(90deg, #000 85%, transparent); }
.newtab { margin: 14px 0 0 14px; }
.winctl { margin-left: auto; display: flex; height: 40px; align-items: center; gap: 36px; padding-right: 18px; }
.bar { height: 46px; background: #3c3d4a; border-radius: 9px 9px 0 0; display: flex; align-items: center; }
.navbtns { display: flex; gap: 22px; padding-left: 15px; width: 120px; }
.omni { width: 870px; height: 34px; border-radius: 17px; background: #2a2b33; display: flex; align-items: center; padding: 0 16px 0 5px; }
.site { width: 24px; height: 24px; border-radius: 50%; background: #3f404d; display: flex; align-items: center; justify-content: center; }
.url { flex: 1; margin-left: 8px; padding-top: 1px; font-size: 13.500px; letter-spacing: .07px; color: #9c9da6; }
.url b { font-weight: 400; color: #fff; letter-spacing: -.15px; }
.exts { display: flex; padding-left: 8px; font-family: "Open Sans", sans-serif; }
.exts i { width: 36px; display: flex; justify-content: center; font-style: normal; }
.exts svg { width: 16px; height: 16px; }
.vline { width: 2px; height: 16px; background: #1c1d24; }
.bar .vline { margin-left: 8px; }
.avatar { width: 20px; height: 20px; margin-left: 17px; border-radius: 50%; background: #ab47bc; text-align: center; font-size: 11px; line-height: 19px; }
.dots { margin-left: 24px; }
.marks { height: 34px; background: #3c3d4a; display: flex; align-items: center; padding: 0 0 5px 19px; letter-spacing: -.3px; }
.apps { width: 97px; display: flex; align-items: center; gap: 8px; }
.pill { width: 54px; height: 20px; border-radius: 5px; background: #4a4b4e; text-align: center; line-height: 19px; }
.gridico { margin: 0 16px 0 15px; }
.marks .vline { margin: 0 13px 0 0; }
.mk { width: 154px; display: flex; align-items: center; gap: 5px; }
.mk.short { width: 90px; }
.mk svg { width: 16px; height: 16px; }
.more { width: 79px; display: flex; justify-content: flex-end; padding-right: 19px; }
.marks .more + .vline { margin: 0 15px 0 0; }
.allmarks { display: flex; align-items: center; gap: 9px; letter-spacing: -.45px; }

/* PDF viewer */
.pdfbar { height: 57px; border-top: 2px solid #5b5c66; background: #3c3c3c; display: flex; align-items: center; padding: 1px 0 0 24px; font-size: 13px; }
.pdftitle { width: 759px; margin-left: 25px; font-weight: 600; letter-spacing: -.02px; }
.pagebox, .zoombox { height: 20px; background: #1e1e1e; text-align: center; line-height: 19px; font-size: 12px; }
.pagebox { width: 24px; }
.of { width: 48px; padding-left: 4px; font-size: 12px; }
.sep { width: 1px; height: 20px; background: #6b6b6b; }
.minus { margin: 0 14px; }
.zoombox { width: 44px; letter-spacing: -.4px; }
.plus { margin: 0 15px 0 14px; }
.fit { margin: 0 19px 0 22px; }
.pdfright { margin-left: auto; padding-right: 30px; display: flex; align-items: center; gap: 25px; }
.viewer { height: 863px; display: flex; background: #282828; }
.thumbs { width: 301px; border-right: 1px solid #5f6164; background: #28292b; display: flex; flex-direction: column; align-items: center; padding-top: 24px; }
.thumb { display: flex; flex-direction: column; align-items: center; height: 201px; }
.pg { width: 108px; height: 153px; background: #fff; }
.pg text { font-family: "Inter", sans-serif; font-size: 16px; fill: #222; }
.pg text[font-size="36"] { font-size: 36px; }
.pg text[font-size="20"] { font-size: 20px; }
.pg text[font-size="18"] { font-size: 18px; }
.pg .b text { font-weight: 700; fill: #000; }
.pg .m text { text-anchor: middle; }
.pg .brand { font-family: "Lato", sans-serif; font-size: 34px; text-anchor: middle; fill: #333; }
.pg .tb { fill: none; stroke: #000; stroke-width: 8; }
.pg .rl { stroke: #8a8a8a; stroke-width: 7; }
.dim > * { opacity: .55; }
.thumb figcaption { margin-top: 10px; font-size: 14px; line-height: 18px; }
.on .pg { outline: 6px solid #8ab4f8; }
.canvas { flex: 1; padding-left: 405px; overflow: hidden; }
.page { width: 794px; height: 863px; background: #fff; color: #000; padding: 13px 0 0 96px; font-family: "Inter", sans-serif; box-shadow: 0 0 6px 1px #181818; }
.page h2 { display: flex; font-size: 19px; line-height: 24px; letter-spacing: .28px; padding-left: 1px; }
.page h2 span { width: 47px; }
.page hr { border: 0; width: 595px; height: 1.500px; background: #a0a0a0; margin: 15px 0 37.500px 3px; }
table { width: 601px; border-collapse: collapse; table-layout: fixed; font-size: 15.500px; letter-spacing: .54px; line-height: 22.400px; color: #111; }
th, td { border: 1.300px solid #111; }
th { width: 207px; line-height: 19.500px; color: #000; font-size: 15.300px; letter-spacing: .8px; vertical-align: middle; padding-top: 1px; }
td { vertical-align: top; padding: 6.500px 0 0 6px; }
.tight td { line-height: 19.500px; padding-top: 8.500px; }
.tight td svg { display: inline-block; vertical-align: -4px; margin: -2px 0; }
.nar { letter-spacing: .36px; }
.r1 { height: 60px; } .r2 { height: 149px; } .r3 { height: 60px; } .r4 { height: 81.500px; } .r5 { height: 74.500px; }
.r6, .r7 { height: 73px; } .r8 { height: 54px; } .r9 { height: 73px; }
.page ul { list-style: none; }
.page li { padding-left: 48px; line-height: 22.600px; letter-spacing: .15px; }
.page li::before { content: "-"; float: left; margin-left: -24px; }
.page td a { color: #1155cc; text-decoration: underline; }
.scroll { width: 15px; background: #fcfcfc; display: flex; flex-direction: column; align-items: center; padding: 7px 0; }
.scroll b { width: 9px; height: 210px; margin-top: auto; margin-bottom: 41px; border-radius: 5px; background: #8b8b8b; }
.up, .down { border: 4.500px solid transparent; }
.up { border-top: 0; border-bottom: 5px solid #8b8b8b; }
.down { border-bottom: 0; border-top: 5px solid #8b8b8b; }

/* Taskbars */
.task { height: 40px; display: flex; color: #1b1b1b; }
.task svg { fill: #000; color: #000; }
.task-l { background: linear-gradient(90deg, #d6d4e1 0, #d8d3e2 520px, #e6d0e4 600px, #ecd4e0 700px, #e8d0e4 770px, #d3d3e0 840px, #d8d4df 920px, #d8cfe2 1100px, #d6d0e0 1300px, #d9d1de 1500px, #d5d5e0 1560px, #d6d6d6 1650px); }
.task-r { background: linear-gradient(90deg, #d6dbe6, #d9dae6 50%, #d8d7e1); padding-left: 1px; }
.slot { width: 49.200px; display: flex; align-items: center; justify-content: center; }
.s48 { width: 48px; }
.s50 { width: 50px; }
.big { stroke-width: 1.800; }
.run { background: linear-gradient(#0078d7, #0078d7) center bottom / 40px 2px no-repeat; }
.act { background: linear-gradient(#0078d7, #0078d7) bottom / 100% 2px no-repeat, rgba(255, 255, 255, .6); }
.multi { background: linear-gradient(90deg, #0078d7 80%, #6caee0 80%) center bottom / 40px 2px no-repeat; }
.search { width: 287px; height: 38px; margin: 1px 0 0 1px; background: #fff; border: 1px solid #c8c8cc; display: flex; align-items: center; padding-left: 10px; gap: 13px; font-size: 14.500px; letter-spacing: -.35px; color: #333; }
.search svg { color: #222; stroke-width: 1.300; }
.tray { margin-left: auto; display: flex; align-items: center; }
.clock { width: 68px; text-align: center; font-size: 11.500px; line-height: 18px; letter-spacing: -.4px; }
.task-l .tray svg { margin-right: 10px; }
.task-l .tray .clock { margin-right: 12px; }
.task-l .tray .clock + svg { margin-right: 19px; }
.peek { width: 5px; height: 40px; border-left: 1px solid #a8a8a8; }
.task-r .clock { margin: 0 0 0 7px; }
.void { flex: 1; background: #000; }

/* Figma window */
.fbar { height: 38px; background: #383838; border-bottom: 1px solid #555; display: flex; align-items: center; font: 500 11px/14px "Inter", sans-serif; }
.home { width: 39px; height: 37px; border-right: 1px solid #4e4e4e; display: flex; align-items: center; justify-content: center; }
.ftab { width: 245px; height: 37px; padding-left: 13px; border-right: 1px solid #4e4e4e; display: flex; align-items: center; color: #bdbdbd; }
.ftab span { width: 199px; margin-left: 9px; padding-top: 1px; overflow: hidden; -webkit-mask: linear-gradient(90deg, #000 92%, transparent); mask: linear-gradient(90deg, #000 92%, transparent); }
.ftab.on { background: #2c2c2c; color: #fff; padding-left: 16px; }
.ftab.on span { width: 173px; margin-right: 11px; }
.fplus { margin-left: 14px; }
.fctl { height: 37px; margin-left: auto; border-left: 1px solid #4e4e4e; padding: 0 19px 0 20px; display: flex; align-items: center; gap: 40px; }
.stage { height: 1362px; padding: 168px 0 0 559px; background: #000; }
.frame { width: 1440px; height: 1024px; display: flex; color: #0d0d0d; font-family: "Inter", sans-serif; }
.side { width: 307px; background: #fff; padding: 39px 32px 0; }
.logo1 { font: 17.500px/20px "Roboto", sans-serif; letter-spacing: -.72px; padding-left: 29px; color: #000; }
.logo2 { font: 56px/56px "Lato", sans-serif; letter-spacing: -2px; margin: -6px 0 89px 27px; color: #000; }
.side nav { display: flex; flex-direction: column; gap: 47px; }
.side nav a { height: 63px; line-height: 66px; padding-left: 55px; border-radius: 5px; font-size: 18px; letter-spacing: .36px; }
.side nav a.on { background: #ececec; font-weight: 500; letter-spacing: .06px; }
.side hr { border: 0; width: 39px; height: 1px; margin: 56px 0 53px 52px; background: #aaa; }
.foot { display: flex; flex-direction: column; gap: 29px; padding-left: 55px; font-size: 14px; line-height: 24px; letter-spacing: .17px; }
.make { width: 628px; padding: 98px 100px 0; background: linear-gradient(90deg, rgba(120, 100, 70, .08), transparent 12px), linear-gradient(35deg, #f2e6d9, #fcefe4); }
.make h1 { font-size: 32.500px; line-height: 40px; font-weight: 500; letter-spacing: .75px; }
.make > p { margin: 25px 0 53px 1px; font-size: 16px; line-height: 19px; letter-spacing: .26px; }
.step { width: 428px; background: #fff; padding: 31px 32px 0 28px; }
.st1 { height: 85px; padding-top: 36px; border-radius: 10px 10px 0 0; margin-bottom: 2px; }
.st2 { height: 310px; margin-bottom: 5px; }
.st3 { height: 85px; padding-top: 32px; }
.head { height: 22px; display: flex; align-items: center; font-size: 16px; line-height: 24px; font-weight: 500; letter-spacing: .18px; }
.head b { width: 22px; height: 22px; margin-right: 10px; border-radius: 50%; background: #0d0d0d; color: #eadfd2; font: 11px/22px "Inter", sans-serif; text-align: center; }
.head b.g { background: #8bc7b1; color: #fff; }
.head small { margin-left: auto; font-size: 12px; font-weight: 400; color: #4b5163; letter-spacing: .27px; padding-top: 3px; }
.lab { margin: 20px 0 11px 38px; font-size: 14px; line-height: 20px; letter-spacing: .12px; }
.l2 { margin: 21px 0 4px 38px; }
.tiles { display: flex; gap: 15px; margin-left: 38px; }
.tiles span { width: 75px; height: 80px; border-radius: 3px; background: #efefef; text-align: center; font-size: 36px; line-height: 80px; }
.tiles .ser { font-family: "Liberation Serif", serif; font-size: 42px; }
.tiles .sel { border: 1px solid #111; background: #8bc7b1; color: #fff; font-family: "Lato", sans-serif; font-size: 41px; line-height: 81px; }
.swatch { width: 47px; height: 47px; margin-left: 38px; border: 1px solid #111; border-radius: 50%; background: #3777ba; }
.next { width: 251px; height: 68px; margin-top: 73px; border-radius: 5px; background: linear-gradient(105deg, #8bc7b1, #9fd3c9); color: #fff; font-size: 16px; line-height: 70px; letter-spacing: .36px; text-align: center; }
.preview { width: 505px; background: #353535; padding: 166px 0 0 41px; }
.menu { width: 424px; height: 644px; padding: 13px 26px 0; border-radius: 6px; background: #fff; color: #4f4f4f; font: 11px/14px "Lato", sans-serif; letter-spacing: .1px; }
.nykos { margin: 0 auto 6px; }
.title { font-size: 31px; line-height: 40px; letter-spacing: -.4px; color: #3777ba; margin: 0 0 19px -1px; }
.cols { display: grid; grid-template-columns: 163px 165px; column-gap: 44px; }
.menu h3 { font-size: 16px; font-weight: 400; line-height: 20px; letter-spacing: -.28px; color: #3777ba; background: linear-gradient(#3777ba, #3777ba) right 12px / calc(100% - 75px) 1px no-repeat; margin-bottom: 8px; }
.menu h3.w131 { background-size: calc(100% - 131px) 1px; margin: 16px 0 7px; }
.menu h3.w69 { background-size: calc(100% - 69px) 1px; margin: 17px 0 7px; }
.menu p { display: flex; justify-content: space-between; line-height: 20px; font-weight: 600; color: #111; letter-spacing: -.17px; }
.menu i { font-style: normal; word-spacing: -2px; }
.dish { height: 62px; }
.dish.h60 { height: 60px; }
.rows { row-gap: 5px; }
```
